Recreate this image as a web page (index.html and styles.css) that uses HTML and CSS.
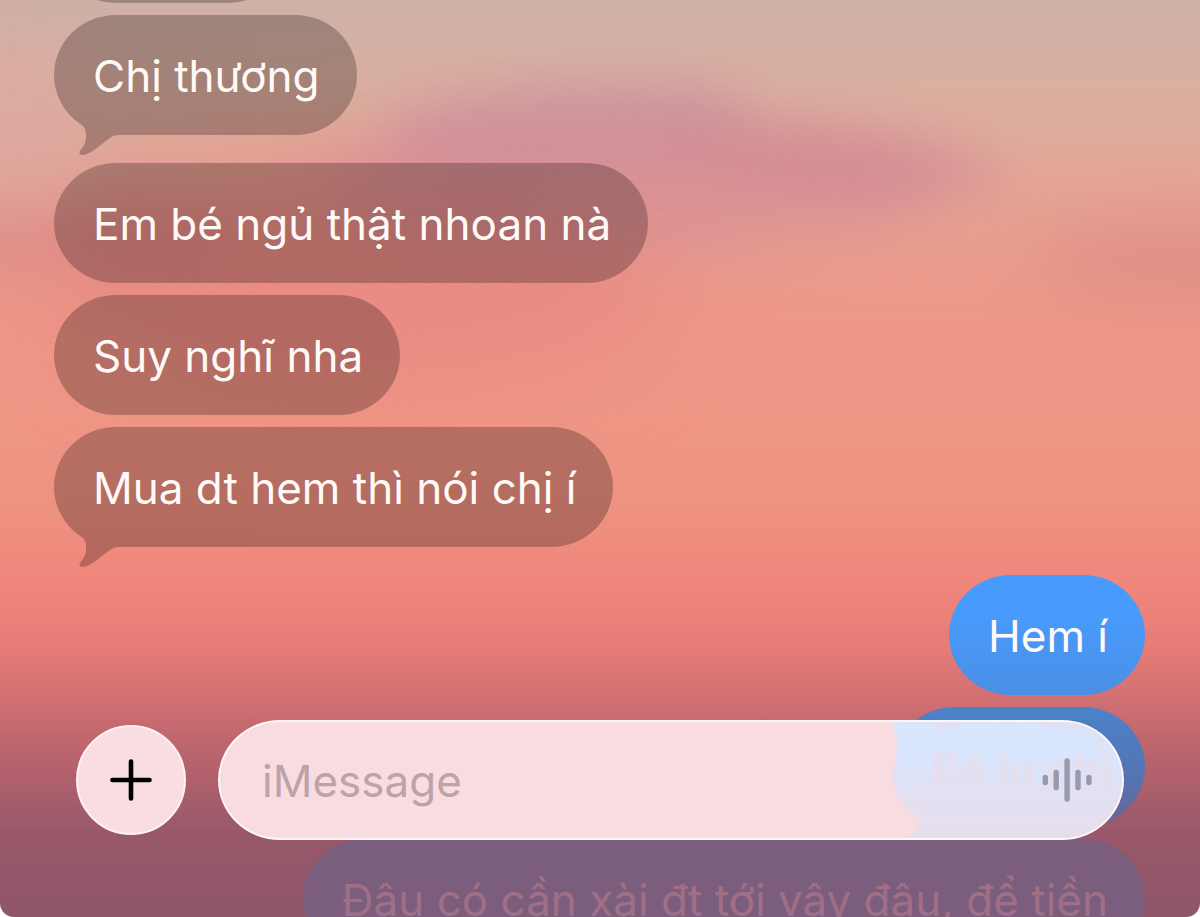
FILE: index.html
```html
<!DOCTYPE html>
<html lang="vi">
<head>
    <meta charset="UTF-8">
    <meta name="viewport" content="width=device-width, initial-scale=1.0">
    <title>iMessage</title>
    <link rel="stylesheet" href="styles.css">
</head>
<body>
    <main class="chat">
        <div class="sky">
            <div class="cloud cloud-left"></div>
            <div class="cloud cloud-low"></div>
            <div class="cloud cloud-mid"></div>
            <div class="cloud cloud-peak"></div>
            <div class="cloud cloud-tail"></div>
            <div class="cloud cloud-right"></div>
            <div class="cloud cloud-glow"></div>
        </div>

        <div class="thread">
            <div class="group received">
                <div class="bubble older"><span class="shape"></span></div>
                <div class="bubble">
                    <span class="shape">
                        <svg class="tail" viewBox="0 0 50 45"><path d="M6 8 C13 14 17 18 16 27 C16 32 13 36 10 40 Q8 44 13 44 C22 43 32 32 43 25 Q46 24 50 24 V0 H6 Z"/></svg>
                    </span>
                    Chị thương
                </div>
            </div>
            <div class="group received">
                <div class="bubble"><span class="shape"></span>Em bé ngủ thật nhoan nà</div>
                <div class="bubble"><span class="shape"></span>Suy nghĩ nha</div>
                <div class="bubble">
                    <span class="shape">
                        <svg class="tail" viewBox="0 0 50 45"><path d="M6 8 C13 14 17 18 16 27 C16 32 13 36 10 40 Q8 44 13 44 C22 43 32 32 43 25 Q46 24 50 24 V0 H6 Z"/></svg>
                    </span>
                    Mua dt hem thì nói chị í
                </div>
            </div>
            <div class="group sent">
                <div class="bubble">Hem í</div>
                <div class="bubble under-glass"></div>
                <div class="bubble faded">Đâu có cần xài đt tới vây đâu, để tiền</div>
            </div>
        </div>

        <form class="composer">
            <button class="add" type="button" aria-label="Add">
                <svg width="44" height="44" viewBox="0 0 44 44"><path d="M22 3.500V40.500M3.500 22H40.500" stroke="#000" stroke-width="4.600" stroke-linecap="round"/></svg>
            </button>
            <div class="field">
                <!-- sent bubble seen through the glass -->
                <svg class="refraction" width="232" height="120" viewBox="0 0 232 120" aria-hidden="true">
                    <defs>
                        <linearGradient id="glass" x1="0" y1="0" x2="0" y2="1">
                            <stop offset="0" stop-color="#d8e6fd"/>
                            <stop offset=".3" stop-color="#d8e5fd"/>
                            <stop offset=".6" stop-color="#e2e0f3"/>
                            <stop offset="1" stop-color="#e7deeb"/>
                        </linearGradient>
                        <filter id="soft"><feGaussianBlur stdDeviation="1.800"/></filter>
                    </defs>
                    <path d="M4 -4 H240 V124 H10 C18 114 30 108 28 97 C14 92 3 78 1 60 C0 46 6 38 5 24 C4 14 0 8 4 -4Z" fill="url(#glass)" filter="url(#soft)"/>
                    <path d="M42 3 Q52 10 66 3M110 3 H122M150 3 Q176 7 192 5 Q204 10 210 28" fill="none" stroke="#e6dfec" stroke-width="4" filter="url(#soft)"/>
                    <text x="39" y="65" class="refracted-text" filter="url(#soft)">Bé iu chị</text>
                </svg>
                <input type="text" placeholder="iMessage" aria-label="iMessage">
                <button class="dictate" type="button" aria-label="Audio message">
                    <svg width="50" height="44" viewBox="0 0 50 44">
                        <path d="M3.300 19.500v5M14.200 14.500v15M25.100 3v38M36 14.500v15M46.900 19.500v5" stroke="#9999ae" stroke-width="5.400" stroke-linecap="round"/>
                    </svg>
                </button>
            </div>
        </form>
    </main>
</body>
</html>
```
FILE: styles.css
```css
* {
    box-sizing: border-box;
}
body {
    margin: 0;
    background: white;
    font-family: Inter, "Noto Sans", sans-serif;
    font-size: 44px;
    line-height: 52px;
}
.chat {
    position: relative;
    height: 100vh;
    overflow: hidden;
    border-radius: 0 0 14px 14px;
    isolation: isolate;
    background: linear-gradient(to bottom,
        #ceb1a7 0%,
        #d9b0a1 9%,
        #e0aa9b 16%,
        #e7a091 24%,
        #ed9888 34%,
        #ef9685 46%,
        #ee9180 56%,
        #f0877c 63%,
        #e67b77 71%,
        #cd6e71 77%,
        #b3616c 84%,
        #98586a 91%,
        #8e5668 100%);
}

/* wallpaper */
.sky {
    position: absolute;
    inset: 0;
    z-index: -1;
    overflow: hidden;
    border-radius: inherit;
}
.cloud {
    position: absolute;
    border-radius: 50%;
    filter: blur(28px);
}
.cloud-left {
    left: -12%;
    top: 22%;
    width: 32%;
    height: 8%;
    background: rgba(212, 128, 132, .45);
}
.cloud-low {
    left: 4%;
    top: 18%;
    width: 52%;
    height: 24%;
    background: rgba(232, 126, 126, .5);
    filter: blur(50px);
}
.cloud-mid {
    left: 27%;
    top: 13%;
    width: 52%;
    height: 14%;
    background: rgba(214, 136, 148, .6);
}
.cloud-peak {
    left: 32%;
    top: 9%;
    width: 31%;
    height: 9%;
    background: rgba(200, 138, 158, .6);
    filter: blur(24px);
    transform: rotate(-4deg);
}
.cloud-tail {
    left: 54%;
    top: 14%;
    width: 30%;
    height: 7%;
    background: rgba(205, 134, 148, .5);
    filter: blur(22px);
    transform: rotate(5deg);
}
.cloud-right {
    left: 86%;
    top: 24%;
    width: 28%;
    height: 9%;
    background: rgba(216, 134, 130, .5);
}
.cloud-glow {
    left: -6%;
    top: 3%;
    width: 14%;
    height: 20%;
    background: rgba(222, 168, 162, .5);
}

/* messages */
.thread {
    display: flex;
    flex-direction: column;
    gap: 28px;
    margin-top: -117px;
    padding: 0 55px 0 54px;
}
.group {
    display: flex;
    flex-direction: column;
    gap: 12px;
}
.received {
    align-items: flex-start;
}
.sent {
    align-items: flex-end;
}
.bubble {
    position: relative;
    z-index: 0;
    min-height: 120px;
    padding: 35px 37px 33px 39px;
    border-radius: 62px / 60px;
    color: #fff9f7;
}
.shape {
    position: absolute;
    inset: 0;
    z-index: -1;
    border-radius: inherit;
    background: #0c0000;
    opacity: .25;
}
.tail {
    position: absolute;
    left: 16px;
    bottom: -21px;
    width: 50px;
    height: 45px;
    fill: #0c0000;
}
.older {
    width: 236px;
}
.sent .bubble {
    background: linear-gradient(#489bfd 30%, #4a8fe5);
}
.sent .under-glass {
    width: 252px;
    background: linear-gradient(#4a83cb, #5673b0 60%, #6b6492);
}
.sent .faded {
    background: #7b5e7e;
    color: #a06f86;
}

/* input bar */
.composer {
    position: absolute;
    left: 76px;
    right: 76px;
    bottom: 77px;
    display: flex;
    align-items: center;
    gap: 32px;
    z-index: 1;
}
.add {
    flex: none;
    display: grid;
    place-items: center;
    width: 110px;
    height: 110px;
    padding: 0;
    border: 2px solid #fff0f3;
    border-radius: 50%;
    background: #f9dde1;
    cursor: pointer;
}
.field {
    position: relative;
    flex: 1;
    display: flex;
    align-items: center;
    height: 120px;
    padding: 0 30px 0 42px;
    border: 2px solid #fff6fa;
    border-radius: 62px / 60px;
    background: #f9dce0;
    overflow: hidden;
}
.refraction {
    position: absolute;
    top: -2px;
    right: -2px;
}
.refracted-text {
    fill: #e6deec;
    font-size: 44px;
    font-weight: 600;
}
.field input {
    position: relative;
    flex: 1;
    min-width: 0;
    height: 100%;
    padding: 2px 0 0;
    border: 0;
    outline: none;
    background: transparent;
    color: #000;
    font: inherit;
}
.field input::placeholder {
    color: #bfa1a8;
    opacity: 1;
}
.dictate {
    position: relative;
    display: flex;
    padding: 0;
    border: 0;
    background: none;
    cursor: pointer;
}
```
